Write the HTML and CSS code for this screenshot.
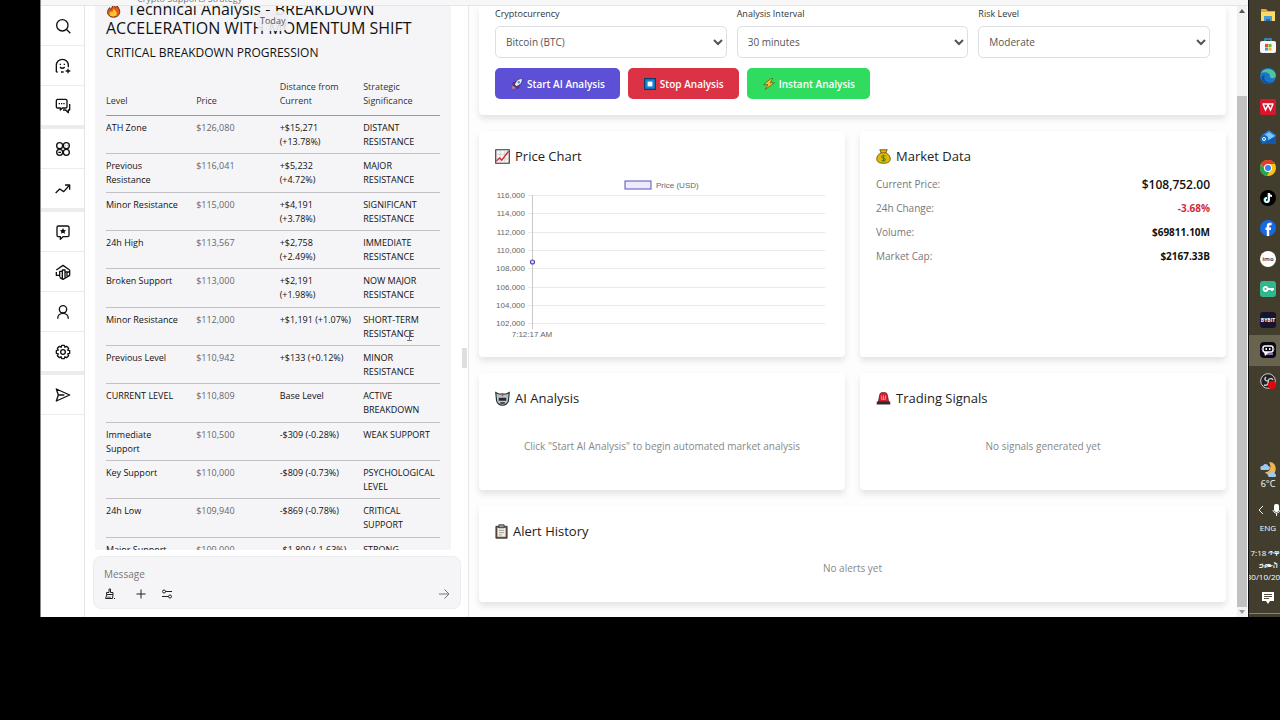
FILE: index.html
```html
<!DOCTYPE html>
<html lang="en">
<head>
  <meta charset="UTF-8">
  <title>Crypto Analysis</title>
  <link rel="stylesheet" href="styles.css">
</head>
<body>

<div class="desktop">
  <div class="window">
    <div class="titlebar"><span>Crypto Supports Strategy</span></div>

    <div class="panes">
      <nav class="rail">
        <a href="#" aria-label="Search"><svg viewBox="0 0 24 24"><circle cx="11" cy="11" r="8.500"/><path d="M17 17l6 6"/></svg></a>
        <a href="#" aria-label="New chat"><svg viewBox="0 0 24 24"><path d="M2 21V11a9 9 0 0 1 18 0v3M2 21h2M9 21h4M8 8.500v2M14 8.500v2M7.500 13.500c2 2.500 5 2.500 7 0M19.500 16v7M16 19.500h7"/></svg></a>
        <a href="#" aria-label="Chats" class="group-end"><svg viewBox="0 0 24 24"><path d="M4 2h12a2 2 0 0 1 2 2v9a2 2 0 0 1-2 2h-5l-3 3v-3H4a2 2 0 0 1-2-2V4a2 2 0 0 1 2-2zM22 9v9h-2v4l-4-4h-4M5.500 8.500h2M9 8.500h2M12.500 8.500h2"/></svg></a>
        <a href="#" aria-label="Bots"><svg viewBox="0 0 24 24"><circle cx="7" cy="7" r="4.500"/><circle cx="17" cy="7" r="4.500"/><circle cx="7" cy="17" r="4.500"/><circle cx="17" cy="17" r="4.500"/><path d="M15.500 7h.5M18 7h.5M5 17h4"/></svg></a>
        <a href="#" aria-label="Trending" class="group-end"><svg viewBox="0 0 24 24"><path d="M1 18l6-6 6 4 9-10M15 6h7v7"/></svg></a>
        <a href="#" aria-label="Create bot"><svg viewBox="0 0 24 24"><path d="M5 3h14a2 2 0 0 1 2 2v12a2 2 0 0 1-2 2h-7l-4 4v-4H5a2 2 0 0 1-2-2V5a2 2 0 0 1 2-2z"/><path class="solid" d="M12 6l1.500 3 3.200.4-2.300 2.200.6 3.200-3-1.500-3 1.500.6-3.200L7.300 9.400l3.200-.4z"/></svg></a>
        <a href="#" aria-label="Leaderboard"><svg viewBox="0 0 24 24"><path d="M2 9l10-7 10 7M2 12v5h5M7 19v-8h4v11M11 12V9h4v11M15 12h3v6M22 9v8l-10 6-5-3M22 12h-4"/></svg></a>
        <a href="#" aria-label="Profile"><svg viewBox="0 0 24 24"><circle cx="12" cy="8" r="5.500"/><path d="M4 22c0-5 3.500-8 8-8s8 3 8 8"/></svg></a>
        <a href="#" aria-label="Settings" class="group-end"><svg viewBox="0 0 24 24"><circle cx="12" cy="12" r="3.500"/><path d="M10 2h4l.8 2.800 2.600-1.300 3 3-1.300 2.600L22 10v4l-2.900.9 1.300 2.600-3 3-2.600-1.300L14 22h-4l-.8-2.800-2.600 1.300-3-3 1.300-2.600L2 14v-4l2.900-.9-1.300-2.600 3-3 2.600 1.300z"/></svg></a>
        <a href="#" aria-label="Send"><svg viewBox="0 0 24 24"><path d="M2 3l20 9-20 9 3-9zM5 12h9"/></svg></a>
      </nav>

      <section class="chat">
        <div class="today">Today</div>
        <div class="messages">
          <div class="bubble">
            <h1><svg class="emoji" viewBox="0 0 20 20"><path fill="#e8581c" stroke="#3a1a10" d="M9 1c3 2 3 4 4 5l2-2c3 4 4 7 3 10-1 3-4 5-8 5s-7-2-8-6c0-3 1-5 3-7l1 3c2-2 3-5 3-8z"/><path fill="#ffc52e" d="M10 8c4 3 5 5 4 8-1 2-7 3-9 0-1-3 1-4 2-5l1 2z"/></svg> Technical Analysis - BREAKDOWN<br>ACCELERATION WITH MOMENTUM SHIFT</h1>
            <h2>CRITICAL BREAKDOWN PROGRESSION</h2>
            <table class="levels">
              <thead>
                <tr><th>Level</th><th>Price</th><th>Distance from<br>Current</th><th>Strategic<br>Significance</th></tr>
              </thead>
              <tbody>
                <tr><td>ATH Zone</td><td>$126,080</td><td>+$15,271<br>(+13.78%)</td><td>DISTANT<br>RESISTANCE</td></tr>
                <tr><td>Previous<br>Resistance</td><td>$116,041</td><td>+$5,232<br>(+4.72%)</td><td>MAJOR<br>RESISTANCE</td></tr>
                <tr><td>Minor Resistance</td><td>$115,000</td><td>+$4,191<br>(+3.78%)</td><td>SIGNIFICANT<br>RESISTANCE</td></tr>
                <tr><td>24h High</td><td>$113,567</td><td>+$2,758<br>(+2.49%)</td><td>IMMEDIATE<br>RESISTANCE</td></tr>
                <tr><td>Broken Support</td><td>$113,000</td><td>+$2,191<br>(+1.98%)</td><td>NOW MAJOR<br>RESISTANCE</td></tr>
                <tr><td>Minor Resistance</td><td>$112,000</td><td>+$1,191 (+1.07%)</td><td>SHORT-TERM<br>RESISTANCE</td></tr>
                <tr><td>Previous Level</td><td>$110,942</td><td>+$133 (+0.12%)</td><td>MINOR<br>RESISTANCE</td></tr>
                <tr><td>CURRENT LEVEL</td><td>$110,809</td><td>Base Level</td><td>ACTIVE<br>BREAKDOWN</td></tr>
                <tr><td>Immediate<br>Support</td><td>$110,500</td><td>-$309 (-0.28%)</td><td>WEAK SUPPORT</td></tr>
                <tr><td>Key Support</td><td>$110,000</td><td>-$809 (-0.73%)</td><td>PSYCHOLOGICAL<br>LEVEL</td></tr>
                <tr><td>24h Low</td><td>$109,940</td><td>-$869 (-0.78%)</td><td>CRITICAL<br>SUPPORT</td></tr>
                <tr><td>Major Support</td><td>$109,000</td><td>-$1,809 (-1.63%)</td><td>STRONG<br>SUPPORT</td></tr>
              </tbody>
            </table>
          </div>
        </div>
        <form class="composer">
          <input type="text" placeholder="Message" aria-label="Message">
          <div class="tools">
            <button type="button" aria-label="Clear context"><svg class="brush" viewBox="0 0 24 24"><path d="M10 2h3v7h5v4H5V9h5zM6 13l-3 8h14l1-8M8 17v4M12 17v4M20 21h2"/></svg></button>
            <button type="button" aria-label="Attach"><svg viewBox="0 0 24 24"><path d="M12 3v18M3 12h18"/></svg></button>
            <button type="button" aria-label="Options"><svg viewBox="0 0 24 24"><circle cx="6" cy="7" r="3"/><circle cx="18" cy="17" r="3"/><path d="M9 7h13M2 17h13"/></svg></button>
            <button type="submit" class="send" aria-label="Send message"><svg viewBox="0 0 24 24"><path d="M2 12h20M13 3l9 9-9 9"/></svg></button>
          </div>
        </form>
        <svg class="ibeam" viewBox="0 0 7 11"><path d="M1 .5h5M1 10.500h5M3.500 1v9"/></svg>
        <div class="resizer"></div>
      </section>

      <main class="preview">
        <section class="card controls">
          <div class="fields">
            <div class="field">
              <label for="coin">Cryptocurrency</label>
              <select id="coin"><option>Bitcoin (BTC)</option></select>
            </div>
            <div class="field">
              <label for="interval">Analysis Interval</label>
              <select id="interval"><option>30 minutes</option></select>
            </div>
            <div class="field">
              <label for="risk">Risk Level</label>
              <select id="risk"><option>Moderate</option></select>
            </div>
          </div>
          <div class="actions">
            <button class="btn start"><svg class="emoji" viewBox="0 0 20 20"><path fill="#c9243f" stroke="#20204a" d="M3 9l5-3 6 6-3 6-3-4-4-2z"/><path fill="#f59c2b" d="M2 18l1-5 4 4z"/><path fill="#e4eef5" stroke="#20204a" d="M6 11C8 5 12 1 19 1c0 7-4 11-10 13z"/><circle cx="13" cy="7" r="2" fill="#3a96dd"/></svg>Start AI Analysis</button>
            <button class="btn stop"><svg class="emoji" viewBox="0 0 20 20"><path fill="#1784d0" stroke="#123a68" stroke-width="2" d="M1 1h18v18H1z"/><path fill="#fff" d="M6 6h8v8H6z"/></svg>Stop Analysis</button>
            <button class="btn instant"><svg class="emoji" viewBox="0 0 20 20"><path fill="#fbc02d" stroke="#4b3a12" d="M13 1L1 11h7l-4 8L19 8h-7l4-7z"/></svg>Instant Analysis</button>
          </div>
        </section>

        <div class="row">
          <section class="card">
            <h3><svg class="emoji" viewBox="0 0 20 20"><path fill="#f6f4f4" stroke="#333" stroke-width="1.500" d="M1 1h18v18H1z"/><path stroke="#c9c9cf" d="M7 2v16M13 2v16M2 7h16M2 13h16"/><path fill="none" stroke="#d22b35" stroke-width="1.800" d="M2 16l4-4 3 3 9-12"/></svg>Price Chart</h3>
            <svg class="chart" viewBox="0 0 334 168" role="img" aria-label="Price chart">
              <rect x="130" y="6" width="26" height="8" fill="#ecebfb" stroke="#5750b8" stroke-width="1"/>
              <text x="161" y="13">Price (USD)</text>
              <g id="gridLines"></g>
              <path d="M37.500 20v134" stroke="#c8c8cc"/>
              <circle cx="37.500" cy="87" r="2" fill="#dedcff" stroke="#4f46c8" stroke-width="1.200"/>
              <text x="37" y="162" text-anchor="middle">7:12:17 AM</text>
            </svg>
          </section>
          <section class="card">
            <h3><svg class="emoji" viewBox="0 0 20 20"><path fill="#e5b800" stroke="#4a3b08" d="M5 1h10l-2 4c4 2 6 5 6 8 0 4-3 6-9 6s-9-2-9-6c0-3 2-6 6-8z"/><path stroke="#6a4d10" d="M6 5h8"/><path fill="none" stroke="#438c1e" stroke-width="1.500" d="M12.500 9.500c-2-1.500-5-1-5 1s5 1.500 5 3.500-3 2-5 1M10 7.500v9.500"/></svg>Market Data</h3>
            <dl class="stats">
              <div><dt>Current Price:</dt><dd class="big">$108,752.00</dd></div>
              <div><dt>24h Change:</dt><dd class="down">-3.68%</dd></div>
              <div><dt>Volume:</dt><dd>$69811.10M</dd></div>
              <div><dt>Market Cap:</dt><dd>$2167.33B</dd></div>
            </dl>
          </section>
        </div>

        <div class="row">
          <section class="card">
            <h3><svg class="emoji" viewBox="0 0 20 20"><path fill="#b9c6ce" stroke="#26292c" stroke-width="1.500" d="M1 2l4 2h10l4-2-1 10c0 4-4 7-8 7s-8-3-8-7z"/><path fill="#26292c" d="M5 9h10v4H5zM7 15h6v2H7z"/><path fill="#7fd4e6" d="M4.500 5.500h3v2h-3zM12.500 5.500h3v2h-3z"/><path stroke="#d33" stroke-width="2" d="M10 3v4"/></svg>AI Analysis</h3>
            <p class="empty">Click "Start AI Analysis" to begin automated market analysis</p>
          </section>
          <section class="card">
            <h3><svg class="emoji" viewBox="0 0 20 20"><path fill="#d8202f" stroke="#5a1018" d="M3 15L5 5c0-2 2-3 5-3s5 1 5 3l2 10z"/><path stroke="#ff8a8a" stroke-width="1.500" d="M7 6l1 6M10 6v6M13 6l-1 6"/><path fill="#2c2c30" d="M1 14h18v4H1z"/></svg>Trading Signals</h3>
            <p class="empty">No signals generated yet</p>
          </section>
        </div>

        <section class="card history">
          <h3><svg class="emoji narrow" viewBox="0 0 17 20"><path fill="#6b5140" stroke="#2d2a28" d="M1 3h15v16H1z"/><path fill="#f2efe9" d="M3 5h11v12H3z"/><path fill="#9a9a9a" stroke="#2d2a28" d="M5 1h7v4H5z"/><path stroke="#8a8680" d="M5 8.500h7M5 11.500h7M5 14.500h4"/></svg>Alert History</h3>
          <p class="empty">No alerts yet</p>
        </section>
      </main>

      <div class="scrollbar">
        <svg viewBox="0 0 10 10"><path d="M2 7l3-4 3 4z" fill="#555"/></svg>
        <div class="thumb"></div>
        <svg viewBox="0 0 10 10"><path d="M2 3l3 4 3-4z" fill="#999"/></svg>
      </div>
    </div>
  </div>

  <aside class="taskbar">
    <div class="taskbar-inner">
      <div class="apps">
        <a href="#" aria-label="File Explorer"><svg viewBox="0 0 16 16"><path fill="#e9a825" d="M1 2h5l2 2h7v10H1z"/><path fill="#ffd966" d="M1 5h14v9H1z"/><path fill="#4a9bd4" d="M4 9h8v5H4z"/><path fill="#2c6c9c" d="M6 12h4v2H6z"/></svg></a>
        <a href="#" aria-label="Store"><svg viewBox="0 0 16 16"><path fill="none" stroke="#2f9fd8" stroke-width="1.500" d="M5 4V1h6v3"/><rect x="0" y="3" width="16" height="12" rx="2" fill="#f6f6f6"/><path fill="#e84e2c" d="M5 6h3v3H5z"/><path fill="#71b82b" d="M8.500 6h3v3h-3z"/><path fill="#2aa1e0" d="M5 9.500h3v3H5z"/><path fill="#f5b81c" d="M8.500 9.500h3v3h-3z"/></svg></a>
        <a href="#" aria-label="Edge"><svg viewBox="0 0 16 16"><circle cx="8" cy="8" r="8" fill="#1b75c9"/><path fill="#4fc3a0" d="M1 5C3 0 14-1 16 7c0 4-5 4-6 2 1-4-5-6-9-4z"/><path fill="#0d4f9e" d="M5 7c-3 5 3 9 8 7-3 3-9 2-11-2-1-3 1-5 3-5z"/></svg></a>
        <a href="#" aria-label="WPS Office"><svg viewBox="0 0 16 16"><rect width="16" height="16" rx="2" fill="#d9162c"/><path fill="none" stroke="#fff" stroke-width="1.500" d="M2.500 5h11M3 5l2.500 6L8 6l2.500 5L13 5"/></svg></a>
        <a href="#" aria-label="Mail"><svg viewBox="0 0 16 16"><path fill="#2a7bd8" d="M2 6l7-5 7 5v9H2z"/><path fill="#7cc4f5" d="M3 7l6-4 6 4-6 4z"/><path fill="#1557a8" d="M2 15l14-8v8z"/><circle cx="4" cy="10" r="4" fill="#1668bd"/><circle cx="4" cy="10" r="1.500" fill="none" stroke="#fff"/></svg></a>
        <a href="#" aria-label="Chrome"><svg viewBox="0 0 16 16"><circle cx="8" cy="8" r="8" fill="#fbc116"/><path fill="#e33b2e" d="M1 4a8 8 0 0 1 14 0H8L5 9z"/><path fill="#2ba24c" d="M1 4l4 6 4 2-2 4A8 8 0 0 1 1 4z"/><circle cx="8" cy="8" r="4" fill="#fff"/><circle cx="8" cy="8" r="3" fill="#3b7ded"/></svg></a>
        <a href="#" aria-label="TikTok"><svg viewBox="0 0 16 16"><circle cx="8" cy="8" r="8" fill="#000"/><path fill="none" stroke="#25d8e0" stroke-width="2" d="M8.500 3v7a2 2 0 1 1-2-2"/><path fill="none" stroke="#fff" stroke-width="1.800" d="M9 3v7a2 2 0 1 1-2-2M9 3c0 2 1 3 3 3"/></svg></a>
        <a href="#" aria-label="Facebook"><svg viewBox="0 0 16 16"><circle cx="8" cy="8" r="8" fill="#1668e3"/><path fill="none" stroke="#fff" stroke-width="2.400" d="M11.500 4H10c-1.500 0-2 1-2 2v10M5.500 8.800H11"/></svg></a>
        <a href="#" class="imo">imo</a>
        <a href="#" aria-label="VPN"><svg viewBox="0 0 16 16"><rect width="16" height="16" rx="3" fill="#2eb88c"/><circle cx="5.500" cy="8" r="2" fill="none" stroke="#fff" stroke-width="1.800"/><path stroke="#fff" stroke-width="1.800" d="M8 8h6M12 8v2"/></svg></a>
        <a href="#" class="bybit">BYBIT</a>
        <a href="#" class="active" aria-label="Poe"><svg viewBox="0 0 16 16"><rect width="16" height="16" rx="4" fill="#0a0a10"/><rect x="3" y="4" width="10" height="6" rx="2" fill="none" stroke="#fff" stroke-width="1.500"/><path stroke="#b58ce8" stroke-width="1.500" d="M1.500 7h2M12.500 7h2M5 12h8"/><path fill="#fff" d="M4 10l1 4 4-4z"/><path fill="#fff" d="M5.500 6h1.500v2H5.500zM9 6h1.500v2H9z"/></svg></a>
        <a href="#" aria-label="OBS Studio"><svg viewBox="0 0 16 16"><circle cx="8" cy="8" r="7.300" fill="#222" stroke="#ccc"/><path fill="none" stroke="#ccc" stroke-width="1.500" d="M8 8c-3 0-4-2-2-4M8 8c1-3 4-3 5-1M8 8c1 3-1 5-4 4"/><circle cx="12" cy="12" r="4" fill="#e5060d"/></svg></a>
      </div>
      <div class="tray">
        <svg class="weather" viewBox="0 0 16 16"><path fill="#f0b44c" d="M9 0c6 0 8 6 6 10-3 4-9 3-10 0 5 0 7-5 4-10z"/><path fill="#9cc8f2" d="M1 8C-1 5 2 3 3 4c1-3 5-2 5 0 3 0 2 4 0 4zM8 14c-1-3 1-4 2-3 2-3 5-1 5 1 2 0 1 3 0 3H9z"/></svg>
        <span>6°C</span>
        <div class="tray-icons">
          <svg viewBox="0 0 12 12"><path fill="none" stroke="#eee" d="M8 2L4 6l4 4"/></svg>
          <svg viewBox="0 0 12 12"><rect x="4" y="0" width="5" height="8" rx="2" fill="#fff"/><path fill="none" stroke="#eee" d="M3 6c0 4 7 4 7 0M6.500 9v3"/></svg>
        </div>
        <span class="lang">ENG</span>
        <div class="clock">7:18 ጥዋት<br>ኃሙስ<br>30/10/2025</div>
        <svg class="notes" viewBox="0 0 12 12"><path fill="#fff" d="M0 0h12v9H8l-2 3-2-3H0z"/><path stroke="#554f3f" d="M2 2.500h8M2 4.500h8M2 6.500h5"/></svg>
      </div>
    </div>
  </aside>
</div>

<script>
  const gridLines = document.getElementById('gridLines');
  const ticks = [116000, 114000, 112000, 110000, 108000, 106000, 104000, 102000];

  gridLines.innerHTML = ticks.map((tick, i) => {
    const y = Math.round(20 + i * 18.3);
    return `
      <path d="M33 ${y}.5h297" stroke="#e9e9ec"/>
      <text x="30" y="${y + 3}" text-anchor="end">${tick.toLocaleString('en-US')}</text>
    `;
  }).join('');
</script>

</body>
</html>
```
FILE: styles.css
```css
* {
  box-sizing: border-box;
}
body {
  margin: 0;
  min-height: 100vh;
  background: #000;
  font-family: "Open Sans", "Noto Sans", sans-serif;
  color: #222;
}
h1, h2, h3, p, dl, dd {
  margin: 0;
  font-weight: 400;
}
button, input, select {
  font-family: inherit;
}
.desktop {
  display: flex;
  height: calc(100vh - 103px);
  margin-left: 40px;
}
.window {
  flex: 1;
  min-width: 0;
  display: flex;
  flex-direction: column;
  background: #fff;
  border-left: 1px solid #888;
}
.titlebar {
  display: flex;
  align-items: flex-end;
  height: 6px;
  padding-left: 96px;
  overflow: hidden;
  background: #f7f7f8;
  border-bottom: 1px solid #e6e6e9;
  font-size: 9px;
  line-height: 12px;
  color: #777;
}
.panes {
  flex: 1;
  min-height: 0;
  display: flex;
}

/* left icon rail */
.rail {
  width: 44px;
  border-right: 1px solid #e4e4e7;
}
.rail a {
  display: flex;
  align-items: center;
  justify-content: center;
  height: 40px;
  border-bottom: 1px solid #ececee;
}
.rail .group-end {
  height: 43px;
  border-bottom: 4px solid #ececee;
}
.rail svg {
  width: 16px;
  height: 16px;
  fill: none;
  stroke: #111;
  stroke-width: 2;
  stroke-linejoin: round;
}
.rail .solid {
  fill: #111;
  stroke: none;
}

/* chat */
.chat {
  position: relative;
  flex: 0 0 384px;
  display: flex;
  flex-direction: column;
  padding: 0 7px 0 8px;
  border-right: 1px solid #e6e6e8;
}
.messages {
  flex: 1;
  min-height: 0;
  overflow: hidden;
  padding: 0 10px 0 2px;
}
.bubble {
  margin-top: -16px;
  padding: 10px 11px;
  background: #f5f5f8;
  color: #111;
}
.bubble h1 {
  font-size: 16px;
  line-height: 19px;
  white-space: nowrap;
}
.bubble h2 {
  margin-top: 7px;
  font-size: 12px;
  line-height: 16px;
}
.levels {
  width: 100%;
  height: 502px;
  margin-top: 13px;
  border-collapse: collapse;
  table-layout: fixed;
  font-size: 9px;
  line-height: 14px;
  white-space: nowrap;
}
.levels th {
  width: 25%;
  padding: 6px 0 7px;
  text-align: left;
  vertical-align: bottom;
  font-weight: 400;
  color: #333;
  border-bottom: 1px solid #999;
}
.levels td {
  padding: 5px 0 4px;
  vertical-align: top;
  border-bottom: 1px solid #c2c2c6;
}
.levels th:first-child {
  width: 27%;
}
.levels th:last-child {
  width: 23%;
}
.levels td:nth-child(2) {
  color: #666;
}
.today {
  position: absolute;
  top: 5px;
  left: 172px;
  padding: 2px 3px;
  border-radius: 6px;
  background: rgba(240, 240, 243, 0.9);
  font-size: 9px;
  line-height: 16px;
  color: #555;
}
.composer {
  margin: 6px 0 8px;
  padding: 9px 10px 6px;
  border: 1px solid #ededf0;
  border-radius: 8px;
  background: #f5f5f8;
}
.composer input {
  display: block;
  width: 100%;
  height: 15px;
  padding: 0;
  border: 0;
  background: none;
  font-size: 10px;
}
.composer input::placeholder {
  color: #777;
}
.tools {
  display: flex;
  gap: 14px;
  margin-top: 5px;
}
.tools button {
  display: flex;
  align-items: center;
  height: 16px;
  padding: 0;
  border: 0;
  background: none;
}
.tools svg {
  width: 12px;
  height: 12px;
  fill: none;
  stroke: #222;
  stroke-width: 2;
}
.tools button:first-child {
  margin-right: 5px;
}
.tools .send {
  margin-left: auto;
}
.tools .send svg {
  stroke: #777;
}
.ibeam {
  position: absolute;
  top: 324px;
  left: 321px;
  width: 7px;
  height: 11px;
  fill: none;
  stroke: #777;
}
.resizer {
  position: absolute;
  top: 342px;
  right: 1px;
  width: 5px;
  height: 20px;
  background: #dedee0;
}

/* preview page */
.preview {
  flex: 1;
  min-width: 0;
  display: flex;
  flex-direction: column;
  gap: 16px;
  padding: 0 11px 0 10px;
  overflow: hidden;
  background: #fdfdfd;
}
.card {
  flex: 1;
  min-width: 0;
  padding: 16px 16px 32px;
  border-radius: 4px;
  background: #fff;
  box-shadow: 0 4px 6px rgba(0, 0, 0, 0.1);
}
.controls,
.history {
  flex: none;
}
.controls {
  padding: 0 16px 16px;
}
.fields {
  display: flex;
  gap: 10px;
}
.field {
  flex: 1;
}
.field label {
  display: block;
  margin-bottom: 4px;
  font-size: 9px;
  line-height: 16px;
  color: #333;
}
.field select {
  width: 100%;
  height: 32px;
  padding: 0 2px 0 6px;
  border: 1px solid #dcdfe3;
  border-radius: 5px;
  background: #fff;
  font-size: 10px;
  color: #555;
}
.actions {
  display: flex;
  gap: 8px;
  margin-top: 10px;
}
.btn {
  display: flex;
  align-items: center;
  gap: 4px;
  height: 31px;
  padding: 0 15px 0 16px;
  border: 0;
  border-radius: 5px;
  color: #fff;
  font-size: 10px;
  font-weight: 600;
}
.btn .emoji {
  width: 12px;
  height: 12px;
}
.start {
  background: #5b50d6;
}
.stop {
  background: #dc3246;
}
.instant {
  background: #2fdc60;
}
.row {
  display: flex;
  gap: 15px;
}
.card h3 {
  display: flex;
  align-items: center;
  gap: 5px;
  font-size: 13px;
  line-height: 18px;
}
.emoji {
  width: 15px;
  height: 15px;
  fill: none;
}
.emoji.narrow {
  width: 13px;
}
.bubble .emoji {
  vertical-align: -3px;
  margin-right: 2px;
}
.chart {
  display: block;
  width: 100%;
  margin-top: 10px;
  margin-bottom: -18px;
}
.chart text {
  font-family: "Liberation Sans", Arial, sans-serif;
  font-size: 8px;
  fill: #666;
}
.stats {
  margin-top: 10px;
  font-size: 10px;
}
.stats div {
  display: flex;
  justify-content: space-between;
  align-items: center;
  height: 18px;
  margin-bottom: 6px;
}
.stats dt {
  color: #777;
}
.stats dd {
  font-weight: 700;
  color: #111;
}
.stats .big {
  font-size: 12px;
  font-weight: 600;
}
.stats .down {
  color: #d02a40;
}
.empty {
  padding: 31px 0 3px;
  text-align: center;
  font-size: 10px;
  line-height: 17px;
  color: #888;
}
.history {
  padding-bottom: 22px;
}
.history .empty {
  padding-top: 20px;
}
.scrollbar {
  display: flex;
  flex-direction: column;
  width: 11px;
  background: #f1f1f1;
  border-right: 1px solid #fff;
}
.scrollbar svg {
  width: 10px;
  height: 10px;
}
.thumb {
  flex: 1;
  margin-top: 80px;
  background: #c1c1c1;
}

/* taskbar, runs off the right edge of the screen */
.taskbar {
  width: 32px;
  overflow: hidden;
  background: #433d2e;
  border-left: 1px solid #111;
}
.taskbar-inner {
  display: flex;
  flex-direction: column;
  width: 38px;
  height: 100%;
}
.apps {
  display: grid;
  grid-auto-rows: 1fr;
  height: 396px;
}
.apps a {
  display: flex;
  align-items: center;
  justify-content: center;
}
.apps svg {
  width: 16px;
  height: 16px;
}
.apps .active {
  background: #68634f;
}
.apps .imo,
.apps .bybit {
  place-self: center;
  width: 16px;
  height: 16px;
  font-size: 6px;
  font-weight: 700;
  text-decoration: none;
}
.apps .imo {
  border-radius: 50%;
  background: #fff;
  color: #456;
}
.apps .bybit {
  border-radius: 3px;
  background: #17142b;
  color: #fff;
  font-size: 5px;
}
.tray {
  display: flex;
  flex-direction: column;
  align-items: center;
  margin-top: auto;
  font-size: 9px;
  line-height: 12px;
  color: #fff;
  white-space: nowrap;
}
.weather {
  width: 16px;
  height: 16px;
}
.tray-icons {
  display: flex;
  gap: 3px;
  margin: 14px 0 6px;
}
.tray-icons svg {
  width: 12px;
  height: 12px;
}
.lang {
  font-size: 8px;
}
.clock {
  width: 44px;
  margin-top: 13px;
  text-align: center;
  font-size: 8px;
}
.notes {
  width: 12px;
  height: 12px;
  margin: 9px 0 9px;
}
.taskbar-inner::after {
  content: "";
  flex: none;
  height: 3px;
  border-top: 1px solid #8a8676;
}
```
